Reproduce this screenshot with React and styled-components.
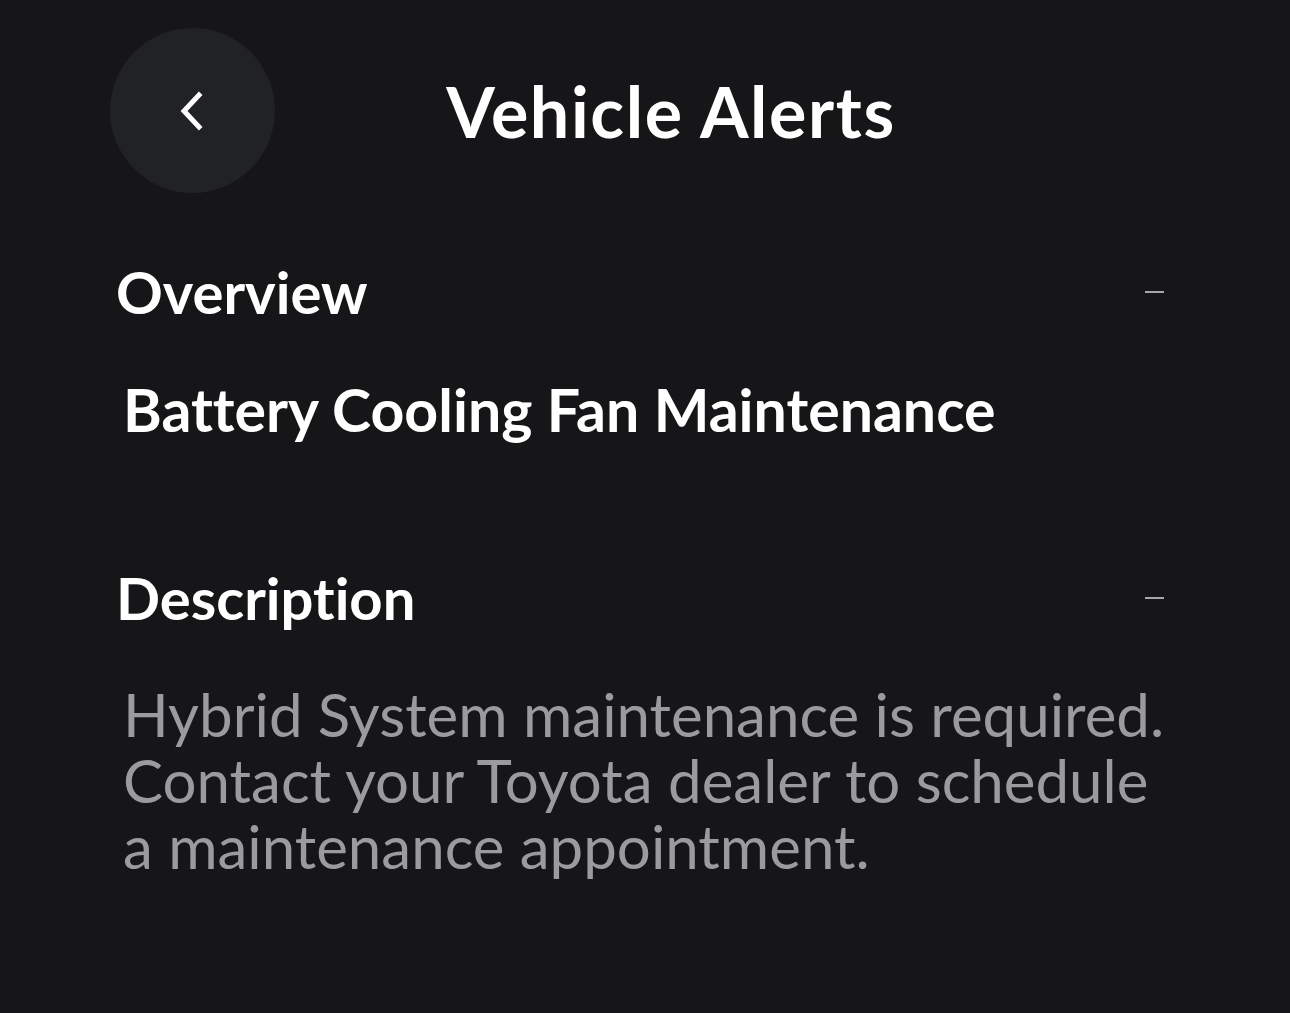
import React from 'react';
import styled, { createGlobalStyle } from 'styled-components';

const GlobalStyle = createGlobalStyle`
  html, body {
    margin: 0;
    padding: 0;
    background: #161618;
  }
  body {
    font-family: Lato, "Open Sans", sans-serif;
    font-variant-ligatures: none;
    color: #ffffff;
  }
`;

const Page = styled.div`
  width: 1290px;
  height: 1013px;
  background: #161618;
  box-sizing: border-box;
  padding: 28px 124px 0 110px;
  overflow: hidden;
`;

const Header = styled.div`
  display: flex;
  align-items: center;
  height: 165px;
`;

const BackButton = styled.button`
  width: 165px;
  height: 165px;
  border-radius: 50%;
  border: none;
  background: #212226;
  display: flex;
  align-items: center;
  justify-content: center;
  padding: 0;
  flex-shrink: 0;
  cursor: pointer;
`;

const Title = styled.h1`
  flex: 1;
  margin: 0;
  padding-right: 99px;
  text-align: center;
  font-size: 70px;
  font-weight: 700;
  letter-spacing: 1.6px;
  color: #ffffff;
`;

const Section = styled.section`
  padding-left: 6px;
  margin-top: ${(p) => p.$top}px;
`;

const SectionHead = styled.div`
  display: flex;
  align-items: center;
  justify-content: space-between;
`;

const SectionTitle = styled.h2`
  margin: 0;
  font-size: 58px;
  font-weight: 700;
  color: #ffffff;
`;

const Collapse = styled.span`
  display: block;
  width: 19px;
  height: 2px;
  background: #a8a8aa;
  margin-right: 2px;
`;

const AlertName = styled.div`
  margin: 48px 0 0 7px;
  font-size: 59px;
  font-weight: 700;
  color: #ffffff;
`;

const Body = styled.p`
  margin: 49px 0 0 7px;
  font-size: 60px;
  line-height: 66px;
  color: #9b9b9d;
`;

function Chevron() {
  return (
    <svg width="28" height="40" viewBox="0 0 28 40" fill="none">
      <path d="M20 4 L5 20 L20 36" stroke="#ffffff" strokeWidth="5" strokeLinecap="square" />
    </svg>
  );
}

export default function App() {
  return (
    <>
      <GlobalStyle />
      <Page>
        <Header>
          <BackButton aria-label="Back">
            <Chevron />
          </BackButton>
          <Title>Vehicle Alerts</Title>
        </Header>

        <Section $top={64}>
          <SectionHead>
            <SectionTitle>Overview</SectionTitle>
            <Collapse />
          </SectionHead>
          <AlertName>Battery Cooling Fan Maintenance</AlertName>
        </Section>

        <Section $top={118}>
          <SectionHead>
            <SectionTitle>Description</SectionTitle>
            <Collapse />
          </SectionHead>
          <Body>
            Hybrid System maintenance is required. Contact your Toyota dealer to schedule a maintenance appointment.
          </Body>
        </Section>
      </Page>
    </>
  );
}
